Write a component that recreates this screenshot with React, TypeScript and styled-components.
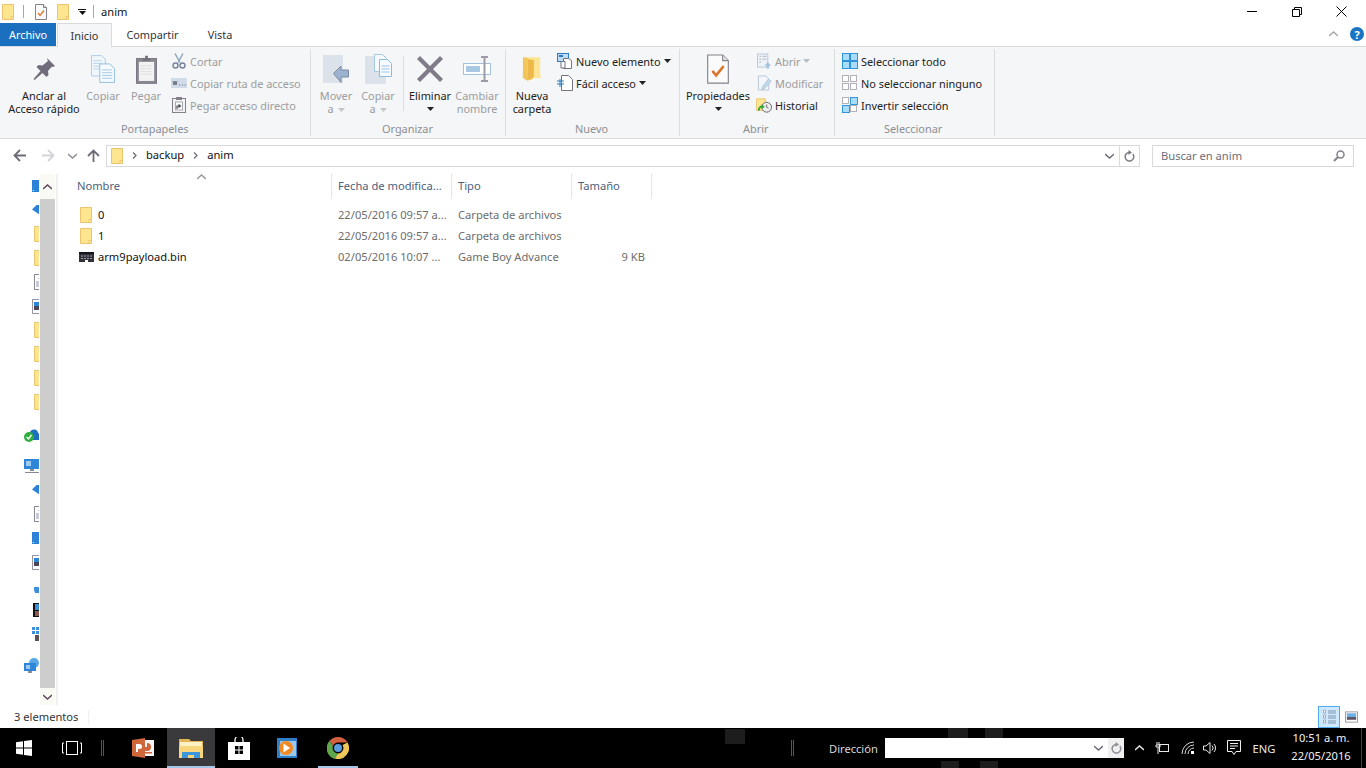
import styled, { createGlobalStyle } from "styled-components";
import type { ReactNode } from "react";

const GlobalStyle = createGlobalStyle`
  html, body {
    margin: 0;
    padding: 0;
    height: 100%;
    overflow: hidden;
    background: #ffffff;
  }
  body {
    font-family: "Noto Sans", "Open Sans", sans-serif;
    font-size: 11.15px;
    color: #1e1e1e;
  }
  * { box-sizing: border-box; }
  svg { display: block; flex: none; }
`;

/* ---------- icons ---------- */

const Folder = () => (
  <svg width="12" height="16" viewBox="0 0 12 16">
    <path d="M.5.5h11v15H.5z" fill="#fde68f" stroke="#eec36b" />
    <path d="M9 15.500v-3h2.500" fill="#ffefb5" stroke="#eec36b" />
  </svg>
);

const CheckDoc = ({ size = 16 }: { size?: number }) => (
  <svg width={size} height={size} viewBox="0 0 16 16">
    <path d="M2.500.5h8l3 3v12h-11z" fill="#fbfbfb" stroke="#85808c" strokeWidth={size > 16 ? 0.6 : 1} />
    <path d="M10.500.5v3h3" fill="#e4e4e4" stroke="#85808c" strokeWidth={size > 16 ? 0.6 : 1} />
    <path d="M5 9l2 2.400L11 6.500" fill="none" stroke="#d9772f" strokeWidth="1.400" />
  </svg>
);

const Pin = () => (
  <svg width="24" height="24" viewBox="0 0 24 24">
    <path d="M15 1l8 8-2 1-1-.5-4 4.500.5 4-2 2-4-4-8 7-1-1 7-8-4-4 2-2 4 .5L16 4l-.5-1z" fill="#716c7b" />
  </svg>
);

const CopyBig = () => (
  <svg width="24" height="28" viewBox="0 0 26 30">
    <path d="M.5.5h11l4 4v18H.5z" fill="#f1f6fb" stroke="#a9cbe8" />
    <path d="M2.500 6h9M2.500 9h9M2.500 12h9M2.500 15h9" stroke="#b8d4ea" />
    <path d="M9.500 9.500h11l5 5v15h-16z" fill="#f6fafe" stroke="#8dbbe0" />
    <path d="M12 16h11M12 19h11M12 22h11M12 25h11" stroke="#9cc5e6" />
  </svg>
);

const PasteBig = () => (
  <svg width="21" height="29" viewBox="0 0 22 30">
    <rect x=".5" y="3.500" width="21" height="26" fill="#8a8791" stroke="#7a7681" />
    <rect x="3" y="7" width="16" height="20" fill="#f2f2f2" />
    <path d="M5 11h12M5 14h12M5 17h12M5 20h12" stroke="#d0d0d0" strokeDasharray="1 1" />
    <path d="M7 6V3h2.500V.5h3V3H15v3z" fill="#77737e" />
  </svg>
);

const Scissors = () => (
  <svg width="16" height="16" viewBox="0 0 16 16">
    <path d="M4 .5l5 9M12 .5l-5 9" stroke="#8fa7bd" strokeWidth="1.500" fill="none" />
    <circle cx="4.500" cy="12.500" r="2.500" fill="none" stroke="#75849b" strokeWidth="1.400" />
    <circle cx="11.500" cy="12.500" r="2.500" fill="none" stroke="#75849b" strokeWidth="1.400" />
  </svg>
);

const CopyPath = () => (
  <svg width="16" height="10" viewBox="0 0 16 10">
    <rect width="16" height="10" fill="#cfdbe8" />
    <path d="M2 3l1 4 1-4 1 4 1-4M8 7h1M11 7h1M13.500 7h1" stroke="#6b6b78" fill="none" />
  </svg>
);

const PasteLink = () => (
  <svg width="14" height="16" viewBox="0 0 14 16">
    <rect x=".5" y="1.500" width="13" height="14" fill="#f4f4f4" stroke="#85818c" />
    <rect x="4" y="0" width="6" height="3" fill="#85818c" />
    <rect x="3.500" y="5" width="7" height="8" fill="#fff" stroke="#a8a8b0" />
    <path d="M5 12V9h3M6.500 7.500L8.500 9 6.500 10.500" stroke="#4c4a55" fill="none" strokeWidth="1.200" />
  </svg>
);

const MoveTo = () => (
  <svg width="26" height="28" viewBox="0 0 26 28">
    <rect width="20" height="28" fill="#dbe2e9" />
    <path d="M25.500 15v7H18v5.500L10.500 18.500 18 11v4z" fill="#9cb4d2" stroke="#7d8aa0" />
  </svg>
);

const CopyTo = () => (
  <svg width="27" height="30" viewBox="0 0 27 30">
    <rect y="2" width="21" height="28" fill="#dbe2e9" />
    <path d="M9.500.5h8l4 4v13h-12z" fill="#f6fafe" stroke="#a4c7e4" />
    <path d="M14.500 5.500h8l4 4v13h-12z" fill="#f6fafe" stroke="#8dbbe0" />
    <path d="M16.500 12h8M16.500 15h8M16.500 18h8" stroke="#9cc5e6" />
  </svg>
);

const BigX = () => (
  <svg width="26" height="26" viewBox="0 0 26 26">
    <path d="M3 0l10 10L23 0l3 3-10 10 10 10-3 3-10-10L3 26l-3-3 10-10L0 3z" fill="#807b88" />
  </svg>
);

const Rename = () => (
  <svg width="28" height="26" viewBox="0 0 28 26">
    <rect x=".5" y="7.500" width="27" height="11" fill="#fff" stroke="#a4c2dc" />
    <rect x="3" y="10" width="14" height="6" fill="#a8c8e4" />
    <path d="M18 1h7M18 25h7M21.500 1v24" stroke="#9e9aa8" strokeWidth="2" fill="none" />
  </svg>
);

const BigFolder = () => (
  <svg width="20" height="28" viewBox="0 0 22 28">
    <path d="M1 1l11 1v23l-6 2-5-3z" fill="#f3c65c" />
    <path d="M6 1h14v20l1 3H6z" fill="#ffe593" />
    <path d="M6 3l7 1v19l-7 3z" fill="#eeb94a" />
  </svg>
);

const NewItem = () => (
  <svg width="16" height="16" viewBox="0 0 16 16">
    <rect x=".5" y=".5" width="11" height="8" fill="#bfdcf4" stroke="#2b7cc2" />
    <rect x="2" y="2" width="4" height="2" fill="#2b7cc2" />
    <path d="M6.500 5.500h5l3 2v8h-8z" fill="#fff" stroke="#77737e" />
    <path d="M4 8.500h4V15H4z" fill="#fff" stroke="#77737e" />
  </svg>
);

const EasyAccess = () => (
  <svg width="16" height="16" viewBox="0 0 16 16">
    <path d="M4.500 .5h7l4 4v11h-11z" fill="#fff" stroke="#77737e" />
    <path d="M0 6h7M0 9h7" stroke="#2b7cc2" strokeWidth="1.200" />
    <path d="M3 4v8" stroke="#2b7cc2" />
  </svg>
);

const OpenIcon = () => (
  <svg width="15" height="16" viewBox="0 0 16 16">
    <rect x=".5" y=".5" width="11" height="14" fill="#eef3f8" stroke="#b5c9da" />
    <path d="M2.500 3h2M6 3h4M2.500 6h2M6 6h4M2.500 9h2" stroke="#a9b4c0" />
    <path d="M8 13l3.500-4 3.500 4h-2v3H10v-3z" fill="#a6c4de" />
  </svg>
);

const EditIcon = () => (
  <svg width="15" height="16" viewBox="0 0 16 16">
    <path d="M1.500 .5h8l3 3v12h-11z" fill="#f4f7fa" stroke="#b7c6d4" />
    <path d="M12 4l3 2-7 8-3 1 1-3z" fill="#c5dcef" stroke="#a7c1d6" />
  </svg>
);

const HistoryIcon = () => (
  <svg width="16" height="15" viewBox="0 0 18 16">
    <path d="M.5.5h10v13H.5z" fill="#fde68f" stroke="#eec36b" />
    <circle cx="12" cy="10" r="5.500" fill="#efefef" stroke="#5f5c66" />
    <path d="M12 7v3l2 1" stroke="#5f5c66" fill="none" />
    <path d="M3 14c0-3 2-5 5-5" stroke="#37a53b" strokeWidth="2" fill="none" />
    <path d="M6 7l4 2-3 3z" fill="#37a53b" />
  </svg>
);

const SelectGrid = ({ on }: { on: boolean[] }) => (
  <svg width="16" height="16" viewBox="0 0 16 16">
    {on.map((lit, i) => (
      <rect
        key={i}
        x={i % 2 ? 8.5 : 0.5}
        y={i > 1 ? 8.5 : 0.5}
        width={lit ? 7 : 6}
        height={lit ? 7 : 6}
        fill={lit ? "#a9dcfb" : "#ffffff"}
        stroke={lit ? "#2f94dc" : "#b3b1b8"}
      />
    ))}
  </svg>
);

const Caret = ({ color = "#222222" }: { color?: string }) => (
  <svg width="7" height="4" viewBox="0 0 7 4">
    <path d="M0 0h7L3.500 4z" fill={color} />
  </svg>
);

const GbaFile = () => (
  <svg width="15" height="10" viewBox="0 0 15 10">
    <rect width="15" height="10" fill="#34303a" />
    <rect width="15" height="2" fill="#17151b" />
    <path d="M2 4h11M2 6.500h11" stroke="#9a98a4" strokeDasharray="2 1" />
    <rect x="6" y="8" width="3" height="2" fill="#ffffff" />
  </svg>
);

const WindowsLogo = () => (
  <svg width="16" height="16" viewBox="0 0 16 16">
    <path d="M0 2.300l7-1v6.200H0zM8 1.100L16 0v7.500H8zM0 8.500h7v6.200l-7-1zM8 8.500h8V16l-8-1.100z" fill="#ffffff" />
  </svg>
);

/* ---------- layout ---------- */

const Page = styled.div`
  width: 1366px;
  height: 768px;
  display: flex;
  flex-direction: column;
  overflow: hidden;
`;

const TitleBar = styled.div`
  height: 23px;
  display: flex;
  align-items: center;
  padding-left: 2px;
`;

const QuickItem = styled.div<{ $ml?: number }>`
  margin-left: ${({ $ml }) => $ml ?? 0}px;
  display: flex;
  flex-direction: column;
  align-items: center;
  gap: 1px;
`;

const TitleSep = styled.div<{ $ml: number }>`
  width: 1px;
  height: 13px;
  margin-left: ${({ $ml }) => $ml}px;
  background: #a8a8a8;
`;

const DropBar = styled.div`
  width: 8px;
  height: 1px;
  background: #111111;
`;

const TitleText = styled.div`
  margin-left: 7px;
  color: #111111;
`;

const Controls = styled.div`
  margin-left: auto;
  margin-right: 2px;
  display: flex;
`;

const Control = styled.div`
  width: 45px;
  height: 23px;
  display: flex;
  align-items: center;
  justify-content: center;
`;

const TabRow = styled.div`
  height: 24px;
  display: flex;
  align-items: stretch;
  border-bottom: 1px solid #dadbdc;
  font-size: 10.9px;
`;

const FileTab = styled.div`
  width: 56px;
  height: 23px;
  background: #1a6fbe;
  color: #ffffff;
  display: flex;
  align-items: center;
  justify-content: center;
`;

const Tab = styled.div<{ $w: number; $active?: boolean }>`
  width: ${({ $w }) => $w}px;
  height: ${({ $active }) => ($active ? 24 : 23)}px;
  margin-left: ${({ $active }) => ($active ? 1 : 0)}px;
  display: flex;
  align-items: center;
  justify-content: center;
  color: #333333;
  background: ${({ $active }) => ($active ? "#f5f6f7" : "transparent")};
  border: ${({ $active }) => ($active ? "1px solid #dadbdc" : "none")};
  border-bottom: none;
`;

const TabRight = styled.div`
  margin-left: auto;
  padding-right: 2px;
  padding-bottom: 1px;
  display: flex;
  align-items: center;
  gap: 12px;
`;

const HelpBadge = styled.div`
  width: 14px;
  height: 14px;
  border-radius: 50%;
  background: #1a74c4;
  color: #ffffff;
  font-size: 11px;
  font-weight: 700;
  display: flex;
  align-items: center;
  justify-content: center;
`;

const Ribbon = styled.div`
  height: 92px;
  background: #f5f6f7;
  border-bottom: 1px solid #dadbdc;
  display: flex;
  padding-top: 2px;
  font-size: 10.9px;
`;

const Group = styled.div<{ $w: number; $pl: number }>`
  width: ${({ $w }) => $w}px;
  height: 87px;
  border-right: 1px solid #dcdddf;
  display: flex;
  flex-direction: column;
  padding-left: ${({ $pl }) => $pl}px;
`;

const GroupBody = styled.div`
  height: 73px;
  display: flex;
`;

const GroupLabel = styled.div<{ $ml: number }>`
  margin-left: ${({ $ml }) => $ml}px;
  height: 14px;
  line-height: 14px;
  color: #8c8f93;
`;

const Large = styled.div<{ $w: number; $ml?: number; $off?: boolean }>`
  width: ${({ $w }) => $w}px;
  margin-left: ${({ $ml }) => $ml ?? 0}px;
  display: flex;
  flex-direction: column;
  align-items: center;
  color: ${({ $off }) => ($off ? "#9b9da0" : "#222222")};
  line-height: 13px;
  text-align: center;
  white-space: nowrap;
`;

const LargeIcon = styled.div`
  height: 40px;
  display: flex;
  align-items: center;
  justify-content: center;
`;

const InlineCaret = styled.span`
  display: inline-block;
  margin-left: 4px;
  vertical-align: 1px;
`;

const CaretLine = styled.div`
  height: 13px;
  display: flex;
  align-items: center;
  justify-content: center;
`;

const Small = styled.div<{ $ml: number }>`
  margin-left: ${({ $ml }) => $ml}px;
  padding-top: 4px;
  display: flex;
  flex-direction: column;
  gap: 6px;
`;

const SmallRow = styled.div<{ $off?: boolean }>`
  height: 16px;
  display: flex;
  align-items: center;
  gap: 3px;
  white-space: nowrap;
  color: ${({ $off }) => ($off ? "#9b9da0" : "#222222")};
`;

const SmallIcon = styled.div`
  width: 16px;
  display: flex;
  justify-content: center;
`;

const InnerSep = styled.div`
  width: 1px;
  height: 55px;
  margin: 7px 0 0 8px;
  background: #dcdddf;
`;

const AddressRow = styled.div`
  height: 33px;
  display: flex;
  align-items: center;
`;

const NavButtons = styled.div`
  width: 106px;
  display: flex;
  align-items: center;
`;

const NavBtn = styled.div<{ $w: number }>`
  width: ${({ $w }) => $w}px;
  display: flex;
  justify-content: center;
`;

const AddressBox = styled.div`
  width: 1034px;
  height: 22px;
  border: 1px solid #d9d9d9;
  display: flex;
  align-items: center;
  padding-left: 4px;
`;

const Crumb = styled.span`
  color: #111111;
  margin: -2px 0 0 9px;
`;

const CrumbArrow = styled.div`
  margin-left: 9px;
`;

const AddressEnd = styled.div`
  margin-left: auto;
  display: flex;
  align-items: center;
  height: 100%;
`;

const EndBtn = styled.div<{ $divider?: boolean }>`
  width: 20px;
  height: 100%;
  display: flex;
  align-items: center;
  justify-content: center;
  border-left: ${({ $divider }) => ($divider ? "1px solid #d9d9d9" : "none")};
`;

const SearchBox = styled.div`
  width: 202px;
  height: 22px;
  margin-left: 12px;
  border: 1px solid #d9d9d9;
  padding: 0 8px;
  display: flex;
  align-items: center;
  justify-content: space-between;
  color: #6d6d78;
`;

const Main = styled.div`
  flex: 1;
  display: flex;
  min-height: 0;
  padding-top: 2px;
`;

const NavPane = styled.div`
  width: 58px;
  border-right: 2px solid #f1f1f1;
  display: flex;
`;

const NavIcons = styled.div`
  width: 40px;
  padding-right: 1px;
  display: flex;
  flex-direction: column;
`;

const NavRow = styled.div<{ $pl: number; $mt?: number }>`
  height: 24px;
  flex: none;
  margin-top: ${({ $mt }) => $mt ?? 0}px;
  padding-left: ${({ $pl }) => $pl}px;
  display: flex;
  align-items: center;
  overflow: hidden;
`;

const NavScroll = styled.div`
  width: 15px;
  display: flex;
  flex-direction: column;
`;

const ScrollArrow = styled.div<{ $h: number }>`
  height: ${({ $h }) => $h}px;
  background: #fafaf5;
  display: flex;
  align-items: center;
  justify-content: center;
`;

const ScrollThumb = styled.div`
  flex: 1;
  background: #cdcdcd;
`;

const Files = styled.div`
  flex: 1;
  padding-left: 14px;
  display: flex;
  flex-direction: column;
`;

const HeaderRow = styled.div`
  height: 25px;
  display: flex;
  color: #4c607a;
  position: relative;
`;

const HeaderCell = styled.div<{ $w: number; $pl?: number }>`
  width: ${({ $w }) => $w}px;
  border-right: 1px solid #e5e5e5;
  padding-left: ${({ $pl }) => $pl ?? 6}px;
  padding-bottom: 2px;
  display: flex;
  align-items: center;
  white-space: nowrap;
  overflow: hidden;
`;

const SortMark = styled.div`
  position: absolute;
  left: 125px;
  top: 0;
`;

const FileList = styled.div`
  padding-top: 5px;
`;

const FileRow = styled.div`
  height: 21px;
  display: flex;
  align-items: center;
  white-space: nowrap;
  color: #6d6d6d;
`;

const NameCell = styled.div`
  width: 260px;
  padding-left: 7px;
  display: flex;
  align-items: center;
  color: #111111;
`;

const FileIconBox = styled.div`
  width: 14px;
  margin-right: 5px;
  display: flex;
  justify-content: center;
`;

const DataCell = styled.div<{ $w: number; $right?: boolean }>`
  width: ${({ $w }) => $w}px;
  padding-left: 6px;
  padding-right: ${({ $right }) => ($right ? 7 : 0)}px;
  text-align: ${({ $right }) => ($right ? "right" : "left")};
`;

const StatusBar = styled.div`
  height: 23px;
  display: flex;
  align-items: center;
  padding-left: 14px;
  color: #333333;
`;

const StatusSep = styled.div`
  height: 12px;
  margin-left: 10px;
  border-left: 1px dotted #e4e4e4;
`;

const ViewButtons = styled.div`
  margin-left: auto;
  margin-right: 8px;
  display: flex;
  align-items: center;
  gap: 5px;
`;

const ViewBtn = styled.div<{ $active?: boolean }>`
  width: ${({ $active }) => ($active ? 22 : 13)}px;
  height: 22px;
  display: flex;
  align-items: center;
  justify-content: center;
  background: ${({ $active }) => ($active ? "#cde8ff" : "transparent")};
  border: ${({ $active }) => ($active ? "1px solid #52a9ec" : "none")};
`;

const Taskbar = styled.div`
  height: 40px;
  background: #000000;
  display: flex;
  align-items: stretch;
  color: #ffffff;
  position: relative;
`;

const WallpaperMark = styled.div<{ $x: number; $y: number; $w: number; $h: number }>`
  position: absolute;
  left: ${({ $x }) => $x}px;
  top: ${({ $y }) => $y}px;
  width: ${({ $w }) => $w}px;
  height: ${({ $h }) => $h}px;
  background-color: #1d1d1d;
`;

const TaskBtn = styled.div<{ $ml?: number; $active?: boolean; $running?: boolean }>`
  flex: none;
  width: 48px;
  margin-left: ${({ $ml }) => $ml ?? 0}px;
  background: ${({ $active }) => ($active ? "#3a3a3c" : "transparent")};
  display: flex;
  align-items: center;
  justify-content: center;
  position: relative;

  &::after {
    content: "";
    position: absolute;
    bottom: 0;
    left: ${({ $active }) => ($active ? 0 : 4)}px;
    right: ${({ $active }) => ($active ? 0 : 4)}px;
    height: 2px;
    background: ${({ $running }) => ($running ? "#a5c8e8" : "transparent")};
  }
`;

const TaskDivider = styled.div<{ $ml: number }>`
  flex: none;
  width: 3px;
  height: 16px;
  align-self: center;
  margin-left: ${({ $ml }) => $ml}px;
  border-left: 1px solid #555555;
  border-right: 1px solid #555555;
  position: relative;
`;

const AddressLabel = styled.div`
  flex: none;
  width: 56px;
  margin-left: 35px;
  align-self: center;
  color: #d8d8d8;
  position: relative;
`;

const TaskInput = styled.div`
  flex: none;
  width: 239px;
  height: 20px;
  align-self: center;
  background: #ffffff;
  display: flex;
  justify-content: flex-end;
  align-items: center;
  position: relative;
`;

const TaskInputBtn = styled.div<{ $bg?: string }>`
  width: ${({ $bg }) => ($bg ? 16 : 20)}px;
  height: 100%;
  background: ${({ $bg }) => $bg ?? "transparent"};
  display: flex;
  align-items: center;
  justify-content: center;
`;

const Tray = styled.div<{ $w: number; $ml?: number }>`
  flex: none;
  width: ${({ $w }) => $w}px;
  margin-left: ${({ $ml }) => $ml ?? 0}px;
  display: flex;
  align-items: center;
  justify-content: center;
  color: #e8e8e8;
`;

const Clock = styled.div`
  flex: none;
  width: 80px;
  margin-top: -2px;
  align-self: center;
  text-align: center;
  line-height: 18px;
  color: #f0f0f0;
`;

const ShowDesktop = styled.div`
  flex: none;
  width: 1px;
  background: #4a4044;
`;

/* ---------- small helpers ---------- */

const Chevron = ({ color, up }: { color: string; up?: boolean }) => (
  <svg width="9" height="6" viewBox="0 0 9 6">
    <path d={up ? "M0 5l4.500-4L9 5" : "M0 1l4.500 4L9 1"} fill="none" stroke={color} strokeWidth="1.500" />
  </svg>
);

const Refresh = ({ color }: { color: string }) => (
  <svg width="11" height="12" viewBox="0 0 11 12">
    <path d="M8.800 4A4.300 4.300 0 1 1 5.500 2.400" fill="none" stroke={color} strokeWidth="1.500" />
    <path d="M4.500 0l3.500 2.500L4.500 5z" fill={color} />
  </svg>
);

const CrumbChevron = () => (
  <svg width="5" height="7" viewBox="0 0 5 7">
    <path d="M1 .5L4 3.500 1 6.500" fill="none" stroke="#6e6e78" strokeWidth="1.300" />
  </svg>
);

const ArrowIcon = ({ color, rot }: { color: string; rot: number }) => (
  <svg width="13" height="13" viewBox="0 0 13 13">
    <g transform={`rotate(${rot} 6.500 6.500)`}>
      <path d="M13 6.500H2M7 1L1.500 6.500 7 12" fill="none" stroke={color} strokeWidth="1.800" />
    </g>
  </svg>
);

const SmallItem = ({ icon, off, children }: { icon: ReactNode; off?: boolean; children: ReactNode }) => (
  <SmallRow $off={off}>
    <SmallIcon>{icon}</SmallIcon>
    {children}
  </SmallRow>
);

/* nav pane art, all of it clipped by the scrollbar */
const NavBlue = () => (
  <svg width="12" height="12" viewBox="0 0 12 12">
    <rect width="12" height="12" fill="#2b82d6" />
    <rect x="1" y="10" width="1" height="1" fill="#fff" />
  </svg>
);
const NavArrow = () => (
  <svg width="8" height="10" viewBox="0 0 8 10">
    <path d="M0 4.500L4.500 0H8v10z" fill="#2b82d6" />
  </svg>
);
const NavDoc = () => (
  <svg width="12" height="16" viewBox="0 0 12 16">
    <rect x=".5" y=".5" width="11" height="15" fill="#fff" stroke="#8c8a94" />
    <path d="M2 8h9M2 10h9M2 12h9" stroke="#8d96a6" />
    <path d="M4 5l3-3 3 3z" fill="#3d8fdc" />
  </svg>
);
const NavImage = () => (
  <svg width="12" height="15" viewBox="0 0 12 15">
    <rect x=".5" y=".5" width="11" height="14" fill="#fff" stroke="#9a95a2" />
    <rect x="2" y="3" width="9" height="4" fill="#2e86d8" />
    <rect x="2" y="7" width="9" height="4" fill="#4b4556" />
  </svg>
);
const NavCloud = () => (
  <svg width="16" height="13" viewBox="0 0 16 13">
    <path d="M6 5a4 4 0 0 1 8-1 3 3 0 0 1 2 2v5H6z" fill="#1f6fc0" />
    <circle cx="5" cy="8" r="5" fill="#2fae3f" />
    <path d="M2.500 8l2 2 3-4" stroke="#fff" strokeWidth="1.400" fill="none" />
  </svg>
);
const NavPc = () => (
  <svg width="16" height="15" viewBox="0 0 16 15">
    <rect width="16" height="10" fill="#2e86d8" />
    <path d="M2 2h5v5H2z" fill="#9ecbf0" />
    <rect x="6" y="10" width="4" height="2" fill="#8c8a94" />
    <rect x="1" y="13" width="15" height="1" fill="#8c8a94" />
  </svg>
);
const NavSmallCloud = () => (
  <svg width="6" height="6" viewBox="0 0 6 6">
    <path d="M0 3a3 3 0 0 1 6-2v5H1z" fill="#3d8fdc" />
  </svg>
);
const NavFilm = () => (
  <svg width="6" height="14" viewBox="0 0 6 14">
    <rect width="6" height="14" fill="#111" />
    <rect x="2" y="1" width="4" height="6" fill="#3d8fdc" />
    <rect x="2" y="8" width="4" height="5" fill="#8a5a50" />
  </svg>
);
const NavMusic = () => (
  <svg width="7" height="14" viewBox="0 0 7 14">
    <path d="M0 0h3v3H0zM4 0h3v3H4zM0 4h3v3H0zM4 4h3v3H4z" fill="#3d8fdc" />
    <rect x="3" y="8" width="4" height="6" fill="#5a5058" />
  </svg>
);
const NavNet = () => (
  <svg width="16" height="16" viewBox="0 0 16 16">
    <circle cx="10" cy="5" r="5" fill="#5aa7e6" />
    <rect y="5" width="12" height="8" fill="#2e86d8" />
    <rect x="2" y="7" width="4" height="4" fill="#9ecbf0" />
    <rect x="4" y="13" width="4" height="2" fill="#8c8a94" />
  </svg>
);

/* taskbar art */
const Ppt = () => (
  <svg width="22" height="20" viewBox="0 0 22 20">
    <rect x="8" y="2" width="14" height="16" fill="#f4f4f4" />
    <path d="M15 5a4 4 0 1 1-4 4h4z" fill="#d2623a" />
    <path d="M11 14h9v1.500h-9z" fill="#d2623a" />
    <path d="M0 2l13-2v20L0 18z" fill="#d0673a" />
    <path d="M4 14V6h3.500a2.500 2.500 0 0 1 0 5H6v3z" fill="#fff" />
  </svg>
);
const ExplorerIcon = () => (
  <svg width="24" height="20" viewBox="0 0 24 20">
    <path d="M0 1h10l2 2h12v17H0z" fill="#e3b453" />
    <rect x="1" y="4" width="22" height="9" fill="#fff2c4" />
    <rect y="8" width="24" height="12" fill="#f7d67c" />
    <path d="M3 20v-6h18v6h-6v-3H9v3z" fill="#3c96dc" />
  </svg>
);
const Store = () => (
  <svg width="22" height="23" viewBox="0 0 22 23">
    <path d="M7 6V3a4 4 0 0 1 8 0v3" fill="none" stroke="#fff" strokeWidth="1.300" />
    <path d="M0 5h22v18H0z" fill="#fff" />
    <path d="M7 9h3.500v3.500H7zM11.500 9H15v3.500h-3.500zM7 13.500h3.500V17H7zM11.500 13.500H15V17h-3.500z" fill="#000" />
  </svg>
);
const Wmp = () => (
  <svg width="20" height="20" viewBox="0 0 20 20">
    <rect width="20" height="20" fill="#2f7fc9" />
    <rect x="3" y="3" width="16" height="15" fill="#9fc6e8" />
    <circle cx="9" cy="10" r="7" fill="#f08a24" />
    <path d="M6.500 5.500L13 10l-6.500 4.500z" fill="#fff" />
  </svg>
);
const Chrome = () => (
  <svg width="22" height="22" viewBox="0 0 22 22">
    <path d="M11 0a11 11 0 0 1 9.500 5.500H11A5.500 5.500 0 0 0 6 9L2.600 3.800A11 11 0 0 1 11 0z" fill="#d3603f" />
    <path d="M2.600 3.800L6 9a5.500 5.500 0 0 0 5 7.500L8 22A11 11 0 0 1 2.600 3.800z" fill="#5fa64a" />
    <path d="M20.500 5.500A11 11 0 0 1 8 21.600l3-5.100a5.500 5.500 0 0 0 4.500-8.500z" fill="#f0c75a" />
    <circle cx="11" cy="11" r="4" fill="#5b9be0" />
  </svg>
);

export default function App() {
  return (
    <Page>
      <GlobalStyle />
      <TitleBar>
        <QuickItem><Folder /></QuickItem>
        <TitleSep $ml={9} />
        <QuickItem $ml={9}><CheckDoc /></QuickItem>
        <QuickItem $ml={8}><Folder /></QuickItem>
        <QuickItem $ml={9}>
          <DropBar />
          <Caret color="#111111" />
        </QuickItem>
        <TitleSep $ml={7} />
        <TitleText>anim</TitleText>
        <Controls>
          <Control>
            <svg width="10" height="1" viewBox="0 0 10 1"><rect width="10" height="1" fill="#000" /></svg>
          </Control>
          <Control>
            <svg width="10" height="10" viewBox="0 0 10 10">
              <path d="M2.500 2.500V.5h7v7h-2M.5 2.500h7v7h-7z" fill="none" stroke="#000" />
            </svg>
          </Control>
          <Control>
            <svg width="11" height="11" viewBox="0 0 11 11">
              <path d="M.5.5l10 10M10.500.5l-10 10" stroke="#000" />
            </svg>
          </Control>
        </Controls>
      </TitleBar>

      <TabRow>
        <FileTab>Archivo</FileTab>
        <Tab $w={55} $active>Inicio</Tab>
        <Tab $w={81}>Compartir</Tab>
        <Tab $w={54}>Vista</Tab>
        <TabRight>
          <Chevron color="#a9a7ae" up />
          <HelpBadge>?</HelpBadge>
        </TabRight>
      </TabRow>

      <Ribbon>
        <Group $w={311} $pl={8}>
          <GroupBody>
            <Large $w={72}>
              <LargeIcon><Pin /></LargeIcon>
              <span>Anclar al</span>
              <span>Acceso rápido</span>
            </Large>
            <Large $w={38} $ml={4} $off>
              <LargeIcon><CopyBig /></LargeIcon>
              <span>Copiar</span>
            </Large>
            <Large $w={34} $ml={7} $off>
              <LargeIcon><PasteBig /></LargeIcon>
              <span>Pegar</span>
            </Large>
            <Small $ml={8}>
              <SmallItem off icon={<Scissors />}>Cortar</SmallItem>
              <SmallItem off icon={<CopyPath />}>Copiar ruta de acceso</SmallItem>
              <SmallItem off icon={<PasteLink />}>Pegar acceso directo</SmallItem>
            </Small>
          </GroupBody>
          <GroupLabel $ml={113}>Portapapeles</GroupLabel>
        </Group>

        <Group $w={195} $pl={8}>
          <GroupBody>
            <Large $w={34} $off>
              <LargeIcon><MoveTo /></LargeIcon>
              <span>Mover</span>
              <span>a<InlineCaret><Caret color="#c4c6c9" /></InlineCaret></span>
            </Large>
            <Large $w={34} $ml={8} $off>
              <LargeIcon><CopyTo /></LargeIcon>
              <span>Copiar</span>
              <span>a<InlineCaret><Caret color="#c4c6c9" /></InlineCaret></span>
            </Large>
            <InnerSep />
            <Large $w={42} $ml={5}>
              <LargeIcon><BigX /></LargeIcon>
              <span>Eliminar</span>
              <CaretLine><Caret /></CaretLine>
            </Large>
            <Large $w={44} $ml={4} $off>
              <LargeIcon><Rename /></LargeIcon>
              <span>Cambiar</span>
              <span>nombre</span>
            </Large>
          </GroupBody>
          <GroupLabel $ml={63}>Organizar</GroupLabel>
        </Group>

        <Group $w={174} $pl={7}>
          <GroupBody>
            <Large $w={38}>
              <LargeIcon><BigFolder /></LargeIcon>
              <span>Nueva</span>
              <span>carpeta</span>
            </Large>
            <Small $ml={6}>
              <SmallItem icon={<NewItem />}>
                Nuevo elemento <Caret />
              </SmallItem>
              <SmallItem icon={<EasyAccess />}>
                Fácil acceso <Caret />
              </SmallItem>
            </Small>
          </GroupBody>
          <GroupLabel $ml={62}>Nuevo</GroupLabel>
        </Group>

        <Group $w={155} $pl={6}>
          <GroupBody>
            <Large $w={64}>
              <LargeIcon><CheckDoc size={30} /></LargeIcon>
              <span>Propiedades</span>
              <CaretLine><Caret /></CaretLine>
            </Large>
            <Small $ml={6}>
              <SmallItem off icon={<OpenIcon />}>
                Abrir <Caret color="#b8bcc2" />
              </SmallItem>
              <SmallItem off icon={<EditIcon />}>Modificar</SmallItem>
              <SmallItem icon={<HistoryIcon />}>Historial</SmallItem>
            </Small>
          </GroupBody>
          <GroupLabel $ml={57}>Abrir</GroupLabel>
        </Group>

        <Group $w={160} $pl={7}>
          <GroupBody>
            <Small $ml={0}>
              <SmallItem icon={<SelectGrid on={[true, true, true, true]} />}>Seleccionar todo</SmallItem>
              <SmallItem icon={<SelectGrid on={[false, false, false, false]} />}>No seleccionar ninguno</SmallItem>
              <SmallItem icon={<SelectGrid on={[false, true, true, false]} />}>Invertir selección</SmallItem>
            </Small>
          </GroupBody>
          <GroupLabel $ml={42}>Seleccionar</GroupLabel>
        </Group>
      </Ribbon>

      <AddressRow>
        <NavButtons>
          <NavBtn $w={38}><ArrowIcon color="#6f6b78" rot={0} /></NavBtn>
          <NavBtn $w={20}><ArrowIcon color="#d4d4d8" rot={180} /></NavBtn>
          <NavBtn $w={28}><Chevron color="#8e8b96" /></NavBtn>
          <NavBtn $w={14}><ArrowIcon color="#6f6b78" rot={90} /></NavBtn>
        </NavButtons>
        <AddressBox>
          <Folder />
          <CrumbArrow><CrumbChevron /></CrumbArrow>
          <Crumb>backup</Crumb>
          <CrumbArrow><CrumbChevron /></CrumbArrow>
          <Crumb>anim</Crumb>
          <AddressEnd>
            <EndBtn><Chevron color="#6f6b78" /></EndBtn>
            <EndBtn $divider><Refresh color="#7c7984" /></EndBtn>
          </AddressEnd>
        </AddressBox>
        <SearchBox>
          Buscar en anim
          <svg width="12" height="12" viewBox="0 0 12 12">
            <circle cx="7.500" cy="4.500" r="3.500" fill="none" stroke="#85818c" strokeWidth="1.500" />
            <path d="M5 7l-4 4" stroke="#85818c" strokeWidth="2" />
          </svg>
        </SearchBox>
      </AddressRow>

      <Main>
        <NavPane>
          <NavIcons>
            <NavRow $pl={32}><NavBlue /></NavRow>
            <NavRow $pl={32}><NavArrow /></NavRow>
            <NavRow $pl={34}><Folder /></NavRow>
            <NavRow $pl={34}><Folder /></NavRow>
            <NavRow $pl={34}><NavDoc /></NavRow>
            <NavRow $pl={32}><NavImage /></NavRow>
            <NavRow $pl={34}><Folder /></NavRow>
            <NavRow $pl={34}><Folder /></NavRow>
            <NavRow $pl={34}><Folder /></NavRow>
            <NavRow $pl={34}><Folder /></NavRow>
            <NavRow $pl={24} $mt={9}><NavCloud /></NavRow>
            <NavRow $pl={24} $mt={7}><NavPc /></NavRow>
            <NavRow $pl={32}><NavArrow /></NavRow>
            <NavRow $pl={34}><NavDoc /></NavRow>
            <NavRow $pl={32}><NavBlue /></NavRow>
            <NavRow $pl={32}><NavImage /></NavRow>
            <NavRow $pl={34} $mt={4}><NavSmallCloud /></NavRow>
            <NavRow $pl={33} $mt={-4}><NavFilm /></NavRow>
            <NavRow $pl={32}><NavMusic /></NavRow>
            <NavRow $pl={24} $mt={8}><NavNet /></NavRow>
          </NavIcons>
          <NavScroll>
            <ScrollArrow $h={25}><Chevron color="#5d4a5c" up /></ScrollArrow>
            <ScrollThumb />
            <ScrollArrow $h={17}><Chevron color="#5d4a5c" /></ScrollArrow>
          </NavScroll>
        </NavPane>

        <Files>
          <HeaderRow>
            <HeaderCell $w={260} $pl={5}>Nombre</HeaderCell>
            <HeaderCell $w={120}>Fecha de modifica...</HeaderCell>
            <HeaderCell $w={120}>Tipo</HeaderCell>
            <HeaderCell $w={80}>Tamaño</HeaderCell>
            <SortMark><Chevron color="#9a98a2" up /></SortMark>
          </HeaderRow>
          <FileList>
            <FileRow>
              <NameCell><FileIconBox><Folder /></FileIconBox>0</NameCell>
              <DataCell $w={120}>22/05/2016 09:57 a...</DataCell>
              <DataCell $w={120}>Carpeta de archivos</DataCell>
            </FileRow>
            <FileRow>
              <NameCell><FileIconBox><Folder /></FileIconBox>1</NameCell>
              <DataCell $w={120}>22/05/2016 09:57 a...</DataCell>
              <DataCell $w={120}>Carpeta de archivos</DataCell>
            </FileRow>
            <FileRow>
              <NameCell><FileIconBox><GbaFile /></FileIconBox>arm9payload.bin</NameCell>
              <DataCell $w={120}>02/05/2016 10:07 ...</DataCell>
              <DataCell $w={120}>Game Boy Advance</DataCell>
              <DataCell $w={80} $right>9 KB</DataCell>
            </FileRow>
          </FileList>
        </Files>
      </Main>

      <StatusBar>
        3 elementos
        <StatusSep />
        <ViewButtons>
          <ViewBtn $active>
            <svg width="13" height="15" viewBox="0 0 13 15">
              <path d="M.5 1h2v3h-2zM.5 6h2v3h-2zM.5 11h2v3h-2z" fill="#fff" stroke="#6f8295" strokeWidth=".6" />
              <path d="M5 2h8M5 4h8M5 7h8M5 9h8M5 12h8M5 14h8" stroke="#7c93aa" />
            </svg>
          </ViewBtn>
          <ViewBtn>
            <svg width="13" height="12" viewBox="0 0 14 12">
              <rect x=".5" y=".5" width="13" height="11" fill="#fff" stroke="#9a95a2" />
              <rect x="2" y="2" width="10" height="4" fill="#6db0e6" />
              <rect x="2" y="6" width="10" height="3" fill="#5e5666" />
            </svg>
          </ViewBtn>
        </ViewButtons>
      </StatusBar>

      <Taskbar>
        <WallpaperMark $x={725} $y={1} $w={20} $h={15} />
        <WallpaperMark $x={948} $y={0} $w={20} $h={10} />
        <WallpaperMark $x={985} $y={0} $w={18} $h={10} />
        <WallpaperMark $x={941} $y={33} $w={18} $h={7} />
        <WallpaperMark $x={980} $y={33} $w={18} $h={7} />
        <TaskBtn><WindowsLogo /></TaskBtn>
        <TaskBtn>
          <svg width="20" height="14" viewBox="0 0 20 14">
            <rect x="4.500" y=".5" width="11" height="13" fill="none" stroke="#fff" />
            <path d="M2 2H.5v10H2M18 2h1.500v10H18" fill="none" stroke="#fff" />
          </svg>
        </TaskBtn>
        <TaskDivider $ml={5} />
        <TaskBtn $ml={15}><Ppt /></TaskBtn>
        <TaskBtn $active $running><ExplorerIcon /></TaskBtn>
        <TaskBtn><Store /></TaskBtn>
        <TaskBtn><Wmp /></TaskBtn>
        <TaskBtn $running $ml={3}><Chrome /></TaskBtn>
        <TaskDivider $ml={429} />
        <AddressLabel>Dirección</AddressLabel>
        <TaskInput>
          <TaskInputBtn><Chevron color="#6f6b78" /></TaskInputBtn>
          <TaskInputBtn $bg="#f0f0f0"><Refresh color="#8f8c96" /></TaskInputBtn>
        </TaskInput>
        <Tray $w={30}><Chevron color="#e8e8e8" up /></Tray>
        <Tray $w={16}>
          <svg width="14" height="12" viewBox="0 0 14 12">
            <rect x="4.500" y="2.500" width="9" height="7" fill="none" stroke="#e8e8e8" />
            <path d="M2 0v3M4 0v3M1 3h4v2H1zM3 5v7" stroke="#e8e8e8" fill="none" />
          </svg>
        </Tray>
        <Tray $w={24} $ml={6}>
          <svg width="14" height="14" viewBox="0 0 14 14">
            <path d="M1 13A12 12 0 0 1 13 1M4 13a9 9 0 0 1 9-9M7 13a6 6 0 0 1 6-6" fill="none" stroke="#d8d8d8" />
            <rect x="10" y="10" width="3" height="3" fill="#fff" />
          </svg>
        </Tray>
        <Tray $w={20}>
          <svg width="14" height="14" viewBox="0 0 14 14">
            <path d="M.5 5h2.500L7 1.500v11L3 9H.5z" fill="none" stroke="#e8e8e8" />
            <path d="M9 4.500a3.500 3.500 0 0 1 0 5M11 3a6 6 0 0 1 0 8" fill="none" stroke="#e8e8e8" />
          </svg>
        </Tray>
        <Tray $w={27}>
          <svg width="14" height="16" viewBox="0 0 14 16">
            <path d="M.5.5h13v11H9l-2 3-2-3H.5z" fill="none" stroke="#f0f0f0" />
            <path d="M3 3.500h8M3 6h8M3 8.500h5" stroke="#f0f0f0" />
          </svg>
        </Tray>
        <Tray $w={34}>ENG</Tray>
        <Clock>
          10:51 a. m.
          <br />
          22/05/2016
        </Clock>
        <ShowDesktop />
      </Taskbar>
    </Page>
  );
}
